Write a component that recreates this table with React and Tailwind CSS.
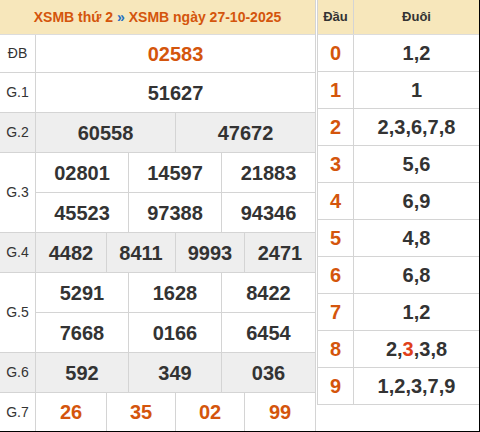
const ORANGE = "text-[#d4550c]";

const Cell = ({ w, children, className = "", last }) => (
  <div
    className={`${w} h-full flex items-center justify-center ${last ? "" : "border-r border-[#d4d4d4]"} ${className}`}
  >
    {children}
  </div>
);

const PrizeRow = ({ label, gray, h, lines, last }) => (
  <div className={`flex ${h} ${gray ? "bg-[#eeeeee]" : "bg-white"} ${last ? "" : "border-b border-[#d4d4d4]"}`}>
    <div className="w-[36px] shrink-0 border-r border-[#d4d4d4] flex items-center justify-center text-[14px] text-[#333]">
      {label}
    </div>
    <div className="flex-1 flex flex-col">{lines}</div>
  </div>
);

const Line = ({ values, color = "text-[#333]", widths, divided }) => (
  <div className={`flex flex-1 ${divided ? "border-b border-[#d4d4d4]" : ""}`}>
    {values.map((v, i) => (
      <Cell key={i} w={widths[i]} last={i === values.length - 1} className={`text-[20px] font-bold ${color}`}>
        {v}
      </Cell>
    ))}
  </div>
);

const W1 = ["w-[279px]"];
const W2 = ["w-[140px]", "w-[139px]"];
const W3 = ["w-[93px]", "w-[93px]", "w-[93px]"];
const W4 = ["w-[71px]", "w-[69px]", "w-[69px]", "w-[70px]"];

const loto = [
  ["0", "1,2"],
  ["1", "1"],
  ["2", "2,3,6,7,8"],
  ["3", "5,6"],
  ["4", "6,9"],
  ["5", "4,8"],
  ["6", "6,8"],
  ["7", "1,2"],
  ["8", null],
  ["9", "1,2,3,7,9"],
];

export default function App() {
  return (
    <div className="w-[480px] h-[432px] bg-black font-['Liberation_Sans',Arial,sans-serif]">
      <div className="w-[479px] h-[431px] bg-white flex overflow-hidden">
        {/* bang ket qua */}
        <div className="w-[316px] shrink-0 border-r border-[#d4d4d4] flex flex-col">
          <div className="h-[35px] shrink-0 bg-[#f7e7bb] border-b border-[#dcdcdc] flex items-center justify-center text-[14px] font-bold text-[#d4550c]">
            XSMB thứ 2&nbsp;<span className="text-[#1f6fc2]">»</span>&nbsp;XSMB ngày 27-10-2025
          </div>
          <PrizeRow label="ĐB" h="h-[38px]" lines={<Line values={["02583"]} widths={W1} color={ORANGE} />} />
          <PrizeRow label="G.1" h="h-[40px]" lines={<Line values={["51627"]} widths={W1} />} />
          <PrizeRow gray label="G.2" h="h-[40px]" lines={<Line values={["60558", "47672"]} widths={W2} />} />
          <PrizeRow
            label="G.3"
            h="h-[80px]"
            lines={
              <>
                <Line divided values={["02801", "14597", "21883"]} widths={W3} />
                <Line values={["45523", "97388", "94346"]} widths={W3} />
              </>
            }
          />
          <PrizeRow gray label="G.4" h="h-[40px]" lines={<Line values={["4482", "8411", "9993", "2471"]} widths={W4} />} />
          <PrizeRow
            label="G.5"
            h="h-[80px]"
            lines={
              <>
                <Line divided values={["5291", "1628", "8422"]} widths={W3} />
                <Line values={["7668", "0166", "6454"]} widths={W3} />
              </>
            }
          />
          <PrizeRow gray label="G.6" h="h-[40px]" lines={<Line values={["592", "349", "036"]} widths={W3} />} />
          <PrizeRow last label="G.7" h="flex-1" lines={<Line values={["26", "35", "02", "99"]} widths={W4} color={ORANGE} />} />
        </div>

        {/* bang loto dau duoi */}
        <div className="ml-px flex-1 self-start border-l border-[#d4d4d4]">
          <div className="h-[35px] flex bg-[#f7e7bb] border-b border-[#dcdcdc] text-[13px] font-bold text-[#333]">
            <div className="w-[36px] border-r border-[#d4d4d4] flex items-center justify-center">Đầu</div>
            <div className="flex-1 flex items-center justify-center">Đuôi</div>
          </div>
          {loto.map(([d, t]) => (
            <div key={d} className="h-[37px] flex border-b border-[#d4d4d4]">
              <div className={`w-[36px] border-r border-[#d4d4d4] flex items-center justify-center text-[20px] font-bold ${ORANGE}`}>
                {d}
              </div>
              <div className="flex-1 flex items-center justify-center text-[20px] font-bold text-[#333]">
                {t ?? (
                  <>
                    2,<span className="text-[#e0401a]">3</span>,3,8
                  </>
                )}
              </div>
            </div>
          ))}
        </div>
      </div>
    </div>
  );
}
